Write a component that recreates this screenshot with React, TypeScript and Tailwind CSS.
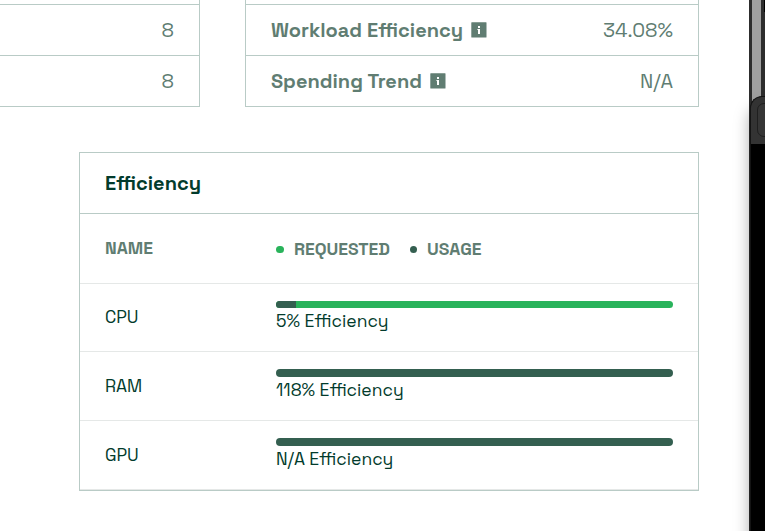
import type { ReactNode } from 'react';

function InfoIcon() {
  return (
    <svg width="16" height="16" viewBox="0 0 16 16" className="shrink-0" aria-hidden="true">
      <rect x="0.3" y="0.3" width="15.2" height="15.2" rx="0.5" fill="#607d72" />
      <path d="M7 4h2v2H7zM6.4 7H9v5H7V8h-.6z" fill="#fff" />
    </svg>
  );
}

function StatRow({ label, value }: { label: ReactNode; value: ReactNode }) {
  return (
    <div className="flex h-[51px] items-center justify-between border-b border-[#b9cbc6] px-[25px] pb-px text-[20px]">
      <div className="flex items-center gap-2 font-semibold">{label}</div>
      <div>{value}</div>
    </div>
  );
}

function Meter({ name, usage, text, bar }: { name: string; usage: number; text: ReactNode; bar: string }) {
  return (
    <>
      <div className="w-[171px]">{name}</div>
      <div className="flex-1 self-start pt-[17px]">
        <div className={`overflow-hidden rounded-full ${bar}`}>
          <div className="h-full bg-[#345f50]" style={{ width: `${Math.min(usage, 100)}%` }} />
        </div>
        <div className="mt-px leading-[24px]">{text}</div>
      </div>
    </>
  );
}

export default function App() {
  return (
    <div className="relative h-[531px] w-[765px] overflow-hidden bg-white font-['Space_Grotesk',Inter,sans-serif] text-[#607d72]">
      <div className="flex gap-[45px]">
        <div className="h-[107px] w-[200px] border-r border-[#b9cbc6]">
          <div className="h-[5px] border-b border-[#b9cbc6]" />
          <StatRow label="" value="8" />
          <StatRow label="" value="8" />
        </div>
        <div className="h-[107px] w-[454px] border-x border-[#b9cbc6]">
          <div className="h-[5px] border-b border-[#b9cbc6]" />
          <StatRow label={<><span>Workload Efficiency</span><InfoIcon /></>} value="34.08%" />
          <StatRow label={<><span>Spending Trend</span><InfoIcon /></>} value="N/A" />
        </div>
      </div>

      <section className="ml-[79px] mt-[45px] h-[339px] w-[620px] border border-[#b9cbc6] text-[17.5px] text-[#023b2c]">
        <h2 className="flex h-[61px] items-center border-b border-[#b9cbc6] px-[25px] pb-px text-[20px] font-semibold">
          Efficiency
        </h2>
        <div className="flex h-[70px] items-center border-b border-[#e5e8e7] px-[25px] text-[17.5px] font-semibold text-[#607d72]">
          <div className="w-[171px]">NAME</div>
          <div className="flex items-center pt-[2px]">
            <span className="mr-[10px] h-[7px] w-2 rounded-full bg-[#29b35b]" />
            <span>REQUESTED</span>
            <span className="ml-5 mr-[10px] size-[7px] rounded-full bg-[#345f50]" />
            <span>USAGE</span>
          </div>
        </div>
        <div className="flex h-[68px] items-center border-b border-[#e5e8e7] px-[25px]">
          <Meter name="CPU" usage={5} text="5% Efficiency" bar="h-[7px] bg-[#29b35b]" />
        </div>
        <div className="flex h-[69px] items-center border-b border-[#e5e8e7] px-[25px]">
          <Meter name="RAM" usage={118} text="118% Efficiency" bar="h-2 bg-[#345f50]" />
        </div>
        <div className="flex h-[69px] items-center border-b border-[#e5e8e7] px-[25px]">
          <Meter name="GPU" usage={100} text="N/A Efficiency" bar="h-2 bg-[#345f50]" />
        </div>
      </section>

      <div className="absolute left-[749px] top-0 flex h-[531px] w-4 bg-[#2d2d2d] pl-[3px]">
        <div className="w-[9px] bg-[#a0a0a0]" />
        <div className="ml-[3px] h-3 w-px bg-black" />
      </div>
      <div className="absolute left-[750px] top-[96px] h-[460px] w-10 overflow-hidden rounded-tl-[12px] border-l border-t border-[#141414] bg-black shadow-[0_12px_16px_rgba(0,0,0,0.35)]">
        <div className="h-[47px] bg-[#333333] pl-[6px] pt-[6px]">
          <div className="h-[34px] w-10 rounded-[7px] border border-[#1f1f1f] bg-[#363636]" />
        </div>
      </div>
    </div>
  );
}
